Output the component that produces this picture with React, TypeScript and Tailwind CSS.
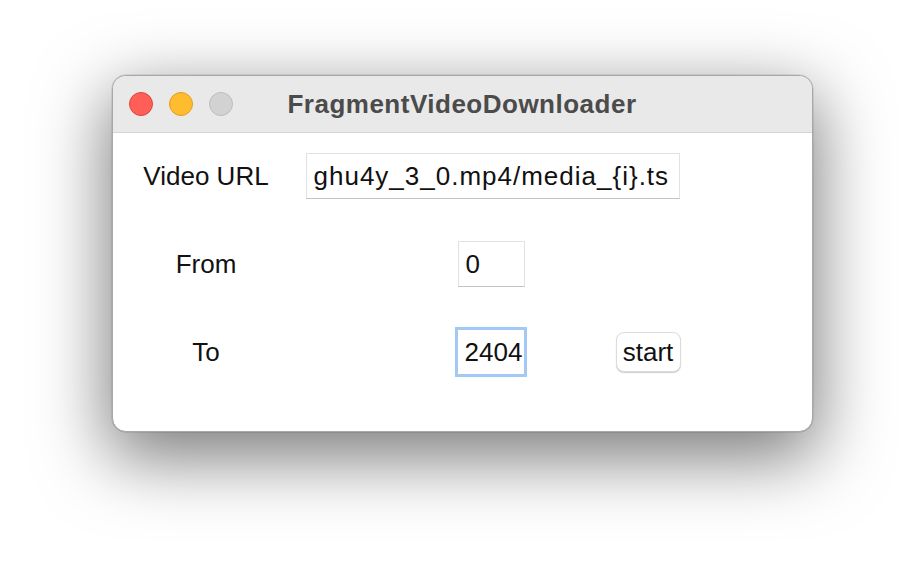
export default function App() {
  return (
    <div className="min-h-[580px] w-full bg-white flex justify-center pt-[75px] font-['Liberation_Sans',Arial,sans-serif]">
      <div className="w-[701px] h-[357px] rounded-[14px] border border-[#a8a8a8] bg-white overflow-hidden shadow-[0_22px_70px_4px_rgba(0,0,0,0.52),0_0_0_0.5px_rgba(0,0,0,0.15)]">
        {/* title bar */}
        <div className="h-[57px] bg-[#e9e9e9] border-b border-[#d4d4d4] grid grid-cols-[1fr_auto_1fr] items-center">
          <div className="flex items-center gap-4 pl-[16px]">
            <span className="w-6 h-6 rounded-full bg-[#ff5f57] border border-[#e0443e]" />
            <span className="w-6 h-6 rounded-full bg-[#febc2e] border border-[#dfa023]" />
            <span className="w-6 h-6 rounded-full bg-[#d2d2d2] border border-[#bdbdbd]" />
          </div>
          <div className="text-[26px] font-bold text-[#4b4b4b] tracking-[0.5px] leading-none">
            FragmentVideoDownloader
          </div>
          <div />
        </div>

        {/* body */}
        <div className="pt-[20px] text-[26px] text-[#111] leading-none">
          <div className="flex items-center h-[46px]">
            <div className="w-[187px] text-center">Video URL</div>
            <div className="ml-[6px] w-[374px] h-[46px] bg-white border border-[#e2e2e2] border-b-[#c2c2c2] flex items-center pl-[7px] overflow-hidden whitespace-nowrap tracking-[1px]">
              ghu4y_3_0.mp4/media_{"{i}"}.ts
            </div>
          </div>

          <div className="flex items-center h-[46px] mt-[42px]">
            <div className="w-[187px] text-center">From</div>
            <div className="ml-[158px] w-[67px] h-[46px] bg-white border border-[#e2e2e2] border-b-[#c2c2c2] flex items-center pl-[7px]">
              0
            </div>
          </div>

          <div className="flex items-center h-[46px] mt-[42px]">
            <div className="w-[187px] text-center">To</div>
            <div className="ml-[155px] w-[72px] h-[50px] border-[3px] border-[#a3c9f7] bg-white flex items-center pl-[7px] overflow-hidden whitespace-nowrap">
              2404
            </div>
            <button className="ml-[89px] w-[65px] h-[40px] rounded-[8px] bg-white border border-[#dcdcdc] shadow-[0_1px_1px_rgba(0,0,0,0.2)] text-[26px] text-[#111] leading-none flex items-center justify-center">
              start
            </button>
          </div>
        </div>
      </div>
    </div>
  );
}
